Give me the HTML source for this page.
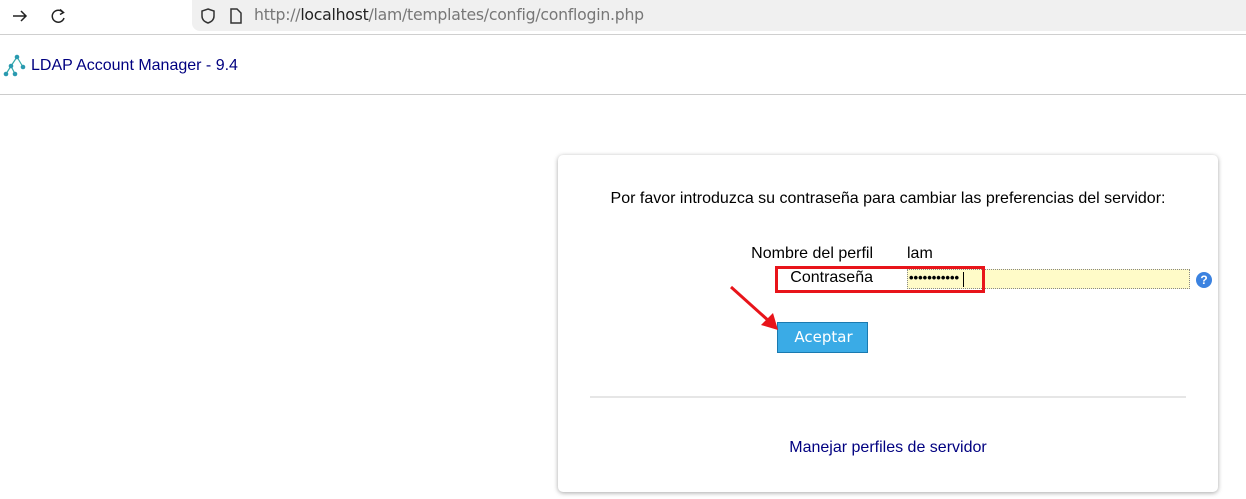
<!DOCTYPE html>
<html><head><meta charset="utf-8">
<style>
*{margin:0;padding:0;box-sizing:border-box}
body{width:1246px;height:499px;overflow:hidden;background:#fff;font-family:"Liberation Sans",Arial,sans-serif;position:relative}
.abs{position:absolute}
</style></head><body>
<div class="abs" style="left:0;top:0;width:1246px;height:35px;background:#fff;border-bottom:1px solid #cfcfcf"></div>
<div class="abs" style="left:192px;top:0;width:1054px;height:31px;background:#f0f0f0;border-radius:0 0 0 8px"></div>
<svg class="abs" style="left:10px;top:6px" width="60" height="20" viewBox="0 0 60 20">
<path d="M3 10h13M11 5l5 5-5 5" fill="none" stroke="#222" stroke-width="1.5"/>
<path d="M53 6.5A6 6 0 1 0 54 12" fill="none" stroke="#222" stroke-width="1.5"/>
<path d="M50 3.5l3.5 3-3.5 2" fill="none" stroke="#222" stroke-width="1.5"/>
</svg>
<svg class="abs" style="left:198px;top:6px" width="50" height="20" viewBox="0 0 50 20">
<path d="M10 3l6 2v5c0 4-3 6-6 7-3-1-6-3-6-7V5z" fill="none" stroke="#333" stroke-width="1.5"/>
<path d="M33 3h6l4 4v10h-10z" fill="none" stroke="#333" stroke-width="1.5"/>
</svg>
<div class="abs" style="left:254px;top:5px;font-family:'DejaVu Sans',sans-serif;font-size:15.7px;color:#777;letter-spacing:-0.25px">http://<span style="color:#222">localhost</span>/lam/templates/config/conflogin.php</div>
<div class="abs" style="left:0;top:94px;width:1246px;height:1px;background:#ccc"></div>
<svg class="abs" style="left:2px;top:53px" width="26" height="26" viewBox="0 0 26 26">
<path d="M15 4L9 13L4 21M9 13L13 21M15 4L21 14" stroke="#3aa" stroke-width="1.2" fill="none"/>
<circle cx="15" cy="4" r="2.3" fill="#2a9ab0"/><circle cx="9" cy="13" r="2.3" fill="#2a9ab0"/><circle cx="21" cy="14" r="2.3" fill="#2a9ab0"/><circle cx="4" cy="21" r="2.3" fill="#2a9ab0"/><circle cx="13" cy="21" r="2.3" fill="#2a9ab0"/>
</svg>
<div class="abs" style="left:31px;top:57px;font-size:16px;color:#000080">LDAP Account Manager - 9.4</div>
<div class="abs" style="left:558px;top:155px;width:660px;height:337px;background:#fff;border-radius:5px;box-shadow:0 1px 5px rgba(0,0,0,.35)"></div>
<div class="abs" style="left:558px;top:190px;width:660px;text-align:center;font-size:16px;color:#000">Por favor introduzca su contraseña para cambiar las preferencias del servidor:</div>
<div class="abs" style="left:700px;top:245px;width:173px;text-align:right;font-size:16px">Nombre del perfil</div>
<div class="abs" style="left:907px;top:245px;font-size:16px">lam</div>
<div class="abs" style="left:700px;top:269px;width:173px;text-align:right;font-size:16px">Contraseña</div>
<div class="abs" style="left:907px;top:269px;width:283px;height:20px;background:#fffbc8;border:1px dotted #888"></div>
<div class="abs" style="left:909px;top:270px;font-size:13px;letter-spacing:0;font-weight:bold">•••••••••••</div>
<div class="abs" style="left:963px;top:272px;width:1px;height:15px;background:#000"></div>
<div class="abs" style="left:775px;top:266px;width:210px;height:27px;border:3px solid #e8141a"></div>
<div class="abs" style="left:1196px;top:272px;width:16px;height:16px;border-radius:50%;background:#3b82e0;color:#fff;font-size:12px;font-weight:bold;text-align:center;line-height:16px">?</div>
<div class="abs" style="left:777px;top:322px;width:91px;height:31px;background:#3aabe6;border:1px solid #1a7ab0;color:#fff;font-family:'DejaVu Sans',sans-serif;font-size:15px;text-align:center;line-height:29px;padding-left:2px">Aceptar</div>
<svg class="abs" style="left:725px;top:282px" width="60" height="55" viewBox="0 0 60 55">
<path d="M6 5L45 40" stroke="#e8141a" stroke-width="3"/>
<path d="M53 48L36 43L48 31Z" fill="#e8141a"/>
</svg>
<div class="abs" style="left:590px;top:396px;width:596px;height:2px;background:#e6e6e6"></div>
<div class="abs" style="left:558px;top:439px;width:660px;text-align:center;font-size:16px;color:#000080">Manejar perfiles de servidor</div>
</body></html>
